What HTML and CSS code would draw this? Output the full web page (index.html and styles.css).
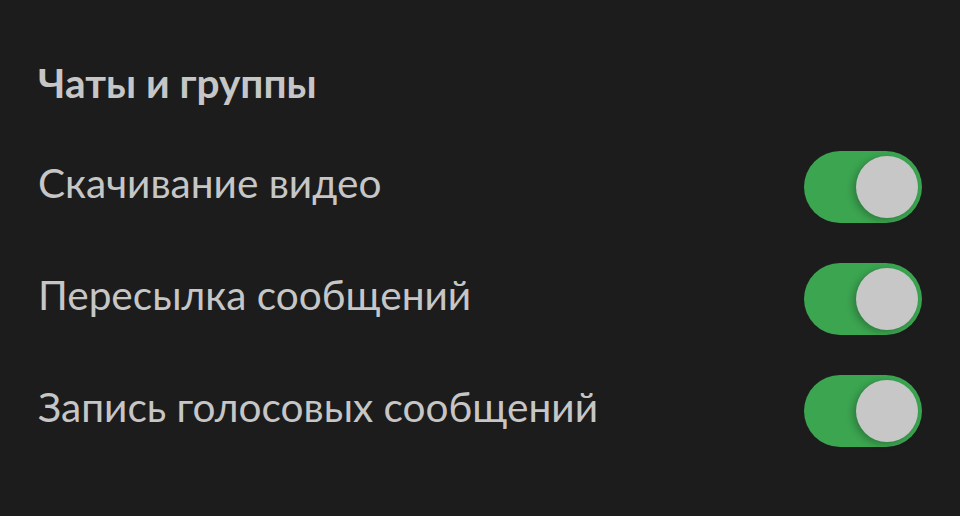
FILE: index.html
```html
<!DOCTYPE html>
<html lang="ru">
<head>
<meta charset="utf-8">
<link rel="stylesheet" href="styles.css">
</head>
<body>
<main class="section">
  <h2 class="section-title">Чаты и группы</h2>
  <div class="row">
    <span class="label">Скачивание видео</span>
    <span class="toggle on"><span class="knob"></span></span>
  </div>
  <div class="row">
    <span class="label">Пересылка сообщений</span>
    <span class="toggle on"><span class="knob"></span></span>
  </div>
  <div class="row">
    <span class="label">Запись голосовых сообщений</span>
    <span class="toggle on"><span class="knob"></span></span>
  </div>
</main>
</body>
</html>
```
FILE: styles.css
```css
html, body {
  margin: 0;
  padding: 0;
  background: #1c1c1c;
  width: 960px;
  height: 516px;
  overflow: hidden;
}
.section {
  font-family: Lato, "Noto Sans", sans-serif;
  color: #c6c6c6;
  padding: 58px 38px 0 38px;
}
.section-title {
  margin: 0;
  font-size: 40.6px;
  font-weight: 700;
  line-height: 50px;
  height: 72px;
}
.row {
  display: flex;
  align-items: center;
  justify-content: space-between;
  height: 112px;
}
.label {
  font-size: 40.6px;
  line-height: 50px;
  padding-bottom: 6px;
}
.toggle {
  width: 118px;
  height: 72px;
  border-radius: 36px;
  background: #3ba550;
  position: relative;
  display: block;
  margin-top: 1px;
}
.knob {
  position: absolute;
  top: 5px;
  right: 4px;
  width: 62px;
  height: 62px;
  border-radius: 50%;
  background: #c7c7c7;
  box-shadow: -3px 2px 7px rgba(0,0,0,0.25);
}
```
